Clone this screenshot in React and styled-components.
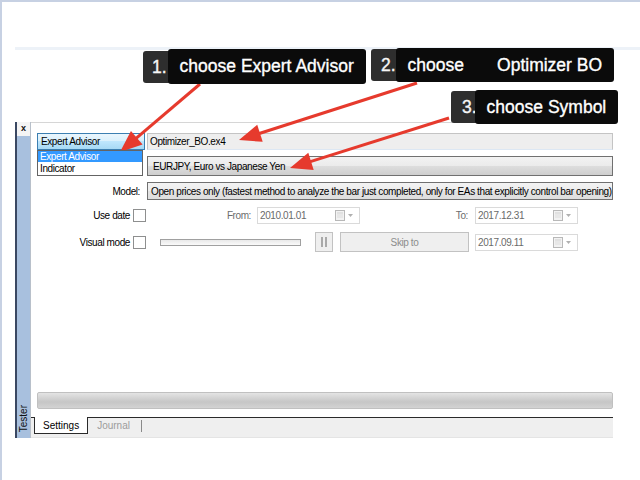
import React from 'react'
import styled, { createGlobalStyle } from 'styled-components'

const GlobalStyle = createGlobalStyle`
  html, body { margin: 0; padding: 0; background: #fff; }
  body { font-family: "Liberation Sans", Arial, sans-serif; }
`

const Page = styled.div`
  position: relative;
  width: 640px;
  height: 480px;
  box-sizing: border-box;
  border-top: 2px solid #c7d1e3;
  border-left: 2px solid #c7d1e3;
  padding-left: 13px;
  overflow: hidden;
  background: #fff;
`

const TopBand = styled.div`
  margin-top: 45px;
  height: 3px;
  background: #edf2f8;
`

const Tester = styled.div`
  margin-top: 72px;
  display: flex;
  width: 598px;
  height: 316px;
`

const Sidebar = styled.div`
  width: 13px;
  flex: none;
  border-left: 2px solid #3a4862;
  border-right: 1px solid #b8c0ca;
  background: #a8c0de;
  display: flex;
  flex-direction: column;
  justify-content: space-between;
  align-items: center;
`

const CloseMark = styled.div`
  width: 100%;
  height: 14px;
  background: #f4f4f4;
  font: bold 9px "Liberation Sans", Arial, sans-serif;
  line-height: 12px;
  text-align: center;
  color: #111;
`

const SideTitle = styled.div`
  writing-mode: vertical-rl;
  transform: rotate(180deg);
  font: 10px "Liberation Sans", Arial, sans-serif;
  color: #111;
  padding: 6px 0 4px;
`

const Main = styled.div`
  flex: 1;
  min-width: 0;
  display: flex;
  flex-direction: column;
  border-top: 1px solid #d6d6d6;
  font-size: 10px;
  letter-spacing: -0.4px;
  color: #000;
`

const Form = styled.div`
  flex: 1;
  display: flex;
  flex-direction: column;
  padding: 10px 0 0 6px;
`

const Row = styled.div`
  display: flex;
  align-items: center;
  height: ${p => p.$h}px;
  margin-top: ${p => p.$gap || 0}px;
`

const LabelCell = styled.div`
  width: 110px;
  flex: none;
  height: 100%;
  display: flex;
  align-items: center;
  justify-content: flex-end;
  gap: 3px;
  padding-right: ${p => p.$pad ?? 7}px;
  box-sizing: border-box;
`

const TypeBox = styled.div`
  position: relative;
  width: 108px;
  height: 17px;
  flex: none;
  box-sizing: border-box;
  border: 1px solid #3c7fb1;
  background: linear-gradient(#eaf6fd 0%, #d9f0fc 50%, #bee6fd 50%, #a7d9f5 100%);
  padding-left: 3px;
  line-height: 15px;
`

const DropList = styled.div`
  position: absolute;
  left: -1px;
  top: 16px;
  width: 104px;
  background: #fff;
  border: 1px solid #646464;
  z-index: 2;
`

const DropItem = styled.div`
  height: 11px;
  line-height: 11px;
  padding: 0 2px;
  margin-bottom: 1px;
  color: ${p => (p.$active ? '#fff' : '#000')};
  background: ${p => (p.$active ? '#3399ff' : 'transparent')};
`

const FileField = styled.div`
  flex: 1;
  min-width: 0;
  height: 17px;
  margin-left: 2px;
  box-sizing: border-box;
  border: 1px solid #c4c4c4;
  border-bottom-color: #dce7f3;
  background: #eeeeee;
  padding-left: 2px;
  line-height: 15px;
`

const Combo = styled.div`
  flex: 1;
  min-width: 0;
  height: 100%;
  box-sizing: border-box;
  border: 1px solid #707070;
  background: ${p =>
    p.$light
      ? 'linear-gradient(#f3f3f3, #ececec 50%, #e2e2e2 50%, #dedede)'
      : 'linear-gradient(#f2f2f2, #ebebeb 50%, #dddddd 50%, #cfcfcf)'};
  padding-left: ${p => p.$pad || 3}px;
  display: flex;
  align-items: center;
  white-space: nowrap;
  overflow: hidden;
`

const Check = styled.div`
  width: 13px;
  height: 13px;
  box-sizing: border-box;
  border: 1px solid #8e8f8f;
  background: #fff;
  flex: none;
`

const FieldLabel = styled.div`
  width: ${p => p.$w}px;
  flex: none;
  text-align: right;
  padding-right: ${p => p.$pad}px;
  box-sizing: border-box;
  color: #6c6c6c;
`

const DateBox = styled.div`
  width: 103px;
  height: 17px;
  flex: none;
  box-sizing: border-box;
  border: 1px solid #dadada;
  background: #fff;
  margin-left: ${p => p.$ml || 0}px;
  display: flex;
  align-items: center;
  justify-content: space-between;
  padding: 0 4px 0 2px;
  color: #6a6a6a;
`

const Track = styled.div`
  width: 141px;
  height: 7px;
  flex: none;
  margin-left: 13px;
  box-sizing: border-box;
  border: 1px solid #a0a0a0;
  background: linear-gradient(#e9e9e9, #fafafa);
`

const SmallButton = styled.div`
  width: ${p => p.$w}px;
  height: 20px;
  flex: none;
  margin-left: ${p => p.$ml}px;
  box-sizing: border-box;
  border: 1px solid #c2c2c2;
  background: #efefef;
  color: #8c8c8c;
  display: flex;
  align-items: center;
  justify-content: center;
`

const Progress = styled.div`
  height: 17px;
  margin: 0 0 8px 6px;
  box-sizing: border-box;
  border: 1px solid #c0c0c0;
  border-radius: 2px;
  background: linear-gradient(#e4e4e4, #d2d2d2 35%, #c6c6c6 60%, #d3d3d3);
`

const TabBar = styled.div`
  height: 21px;
  box-sizing: border-box;
  display: flex;
  align-items: flex-start;
  padding-left: 3px;
  background: #efefef;
  border-top: 1px solid #2a2a2a;
  border-bottom: 1px solid #e4e4e4;
  letter-spacing: 0;
`

const Tab = styled.div`
  height: 17px;
  margin-top: -1px;
  line-height: 17px;
  padding: 0 8px;
  box-sizing: border-box;
  color: ${p => (p.$active ? '#000' : '#9c9c9c')};
  background: ${p => (p.$active ? '#fff' : 'transparent')};
  border: 1px solid ${p => (p.$active ? '#2a2a2a' : 'transparent')};
  border-top: none;
`

const TabSep = styled.div`
  width: 1px;
  height: 12px;
  margin: 2px 0 0 2px;
  background: #8a8a8a;
`

const Overlay = styled.div`
  position: absolute;
  left: -2px;
  top: -2px;
  width: 640px;
  height: 480px;
  pointer-events: none;
`

const Arrows = styled.svg`
  position: absolute;
  left: 0;
  top: 0;
`

const Callout = styled.div`
  position: absolute;
  left: ${p => p.$x}px;
  top: ${p => p.$y}px;
  display: flex;
  align-items: center;
  font-family: "Liberation Sans", Arial, sans-serif;
  font-size: 17.5px;
  color: #fff;
  -webkit-text-stroke: 0.35px #fff;
  white-space: nowrap;
`

const Num = styled.div`
  height: 32px;
  line-height: 32px;
  padding: 0 ${p => p.$r}px 0 ${p => p.$l}px;
  background: #2e2e2e;
  border-radius: 3px;
  color: #f2f2f2;
`

const Bubble = styled.div`
  height: ${p => p.$h || 35}px;
  line-height: ${p => p.$h || 35}px;
  margin-left: -3px;
  padding: 0 12px;
  background: #0b0b0b;
  border-radius: 3px;
`

const Gap = styled.span`
  margin-left: ${p => p.$w}px;
`

const CalendarIcon = () => (
  <svg width="20" height="11" viewBox="0 0 20 11">
    <rect x="0.5" y="0.5" width="9" height="10" fill="#f2f2f2" stroke="#b8b8b8" />
    <line x1="2" y1="3" x2="8" y2="3" stroke="#cfcfcf" />
    <line x1="2" y1="5" x2="8" y2="5" stroke="#dcdcdc" />
    <line x1="2" y1="7" x2="8" y2="7" stroke="#dcdcdc" />
    <path d="M13 4 L18 4 L15.5 7 Z" fill="#b0b0b0" />
  </svg>
)

const PauseIcon = () => (
  <svg width="8" height="10" viewBox="0 0 8 10">
    <rect x="1" y="0" width="2" height="10" fill="#a9a9a9" />
    <rect x="5" y="0" width="2" height="10" fill="#a9a9a9" />
  </svg>
)

const arrows = [
  { from: [200, 84], tip: [120, 152] },
  { from: [417, 83], tip: [239, 140] },
  { from: [449, 118], tip: [290, 168] },
]

const headPoints = (from, tip) => {
  const dx = tip[0] - from[0]
  const dy = tip[1] - from[1]
  const len = Math.hypot(dx, dy)
  const ux = dx / len
  const uy = dy / len
  const bx = tip[0] - ux * 22
  const by = tip[1] - uy * 22
  const nx = -uy
  const ny = ux
  return {
    pts: `${tip[0]},${tip[1]} ${bx + nx * 9},${by + ny * 9} ${bx - nx * 9},${by - ny * 9}`,
    end: [bx + ux * 4, by + uy * 4],
  }
}

export default function App() {
  return (
    <Page>
      <GlobalStyle />
      <TopBand />
      <Tester>
        <Sidebar>
          <CloseMark>x</CloseMark>
          <SideTitle>Tester</SideTitle>
        </Sidebar>
        <Main>
          <Form>
            <Row $h={17}>
              <TypeBox>
                Expert Advisor
                <DropList>
                  <DropItem $active>Expert Advisor</DropItem>
                  <DropItem>Indicator</DropItem>
                </DropList>
              </TypeBox>
              <FileField>Optimizer_BO.ex4</FileField>
            </Row>
            <Row $h={20} $gap={6}>
              <LabelCell />
              <Combo $pad={5}>EURJPY, Euro vs Japanese Yen</Combo>
            </Row>
            <Row $h={18} $gap={6}>
              <LabelCell>Model:</LabelCell>
              <Combo $light>
                Open prices only (fastest method to analyze the bar just completed, only for EAs that explicitly control bar opening)
              </Combo>
            </Row>
            <Row $h={17} $gap={7}>
              <LabelCell $pad={1}>
                Use date <Check />
              </LabelCell>
              <FieldLabel $w={110} $pad={6}>From:</FieldLabel>
              <DateBox>
                2010.01.01
                <CalendarIcon />
              </DateBox>
              <FieldLabel $w={115} $pad={7}>To:</FieldLabel>
              <DateBox>
                2017.12.31
                <CalendarIcon />
              </DateBox>
            </Row>
            <Row $h={20} $gap={8}>
              <LabelCell $pad={1}>
                Visual mode <Check />
              </LabelCell>
              <Track />
              <SmallButton $w={18} $ml={14}>
                <PauseIcon />
              </SmallButton>
              <SmallButton $w={129} $ml={7}>Skip to</SmallButton>
              <DateBox $ml={6}>
                2017.09.11
                <CalendarIcon />
              </DateBox>
            </Row>
          </Form>
          <Progress />
          <TabBar>
            <Tab $active>Settings</Tab>
            <Tab>Journal</Tab>
            <TabSep />
          </TabBar>
        </Main>
      </Tester>

      <Overlay>
        <Arrows width="640" height="480" viewBox="0 0 640 480">
          {arrows.map((a, i) => {
            const h = headPoints(a.from, a.tip)
            return (
              <g key={i}>
                <line
                  x1={a.from[0]}
                  y1={a.from[1]}
                  x2={h.end[0]}
                  y2={h.end[1]}
                  stroke="#e63a2d"
                  strokeWidth="3"
                />
                <polygon points={h.pts} fill="#e63a2d" />
              </g>
            )
          })}
        </Arrows>
        <Callout $x={143} $y={49}>
          <Num $l={9} $r={4}>1.</Num>
          <Bubble>choose Expert Advisor</Bubble>
        </Callout>
        <Callout $x={371} $y={48}>
          <Num $l={10} $r={3}>2.</Num>
          <Bubble $h={34}>
            choose<Gap $w={33}>Optimizer BO</Gap>
          </Bubble>
        </Callout>
        <Callout $x={451} $y={90}>
          <Num $l={11} $r={1}>3.</Num>
          <Bubble $h={34}>choose Symbol</Bubble>
        </Callout>
      </Overlay>
    </Page>
  )
}
